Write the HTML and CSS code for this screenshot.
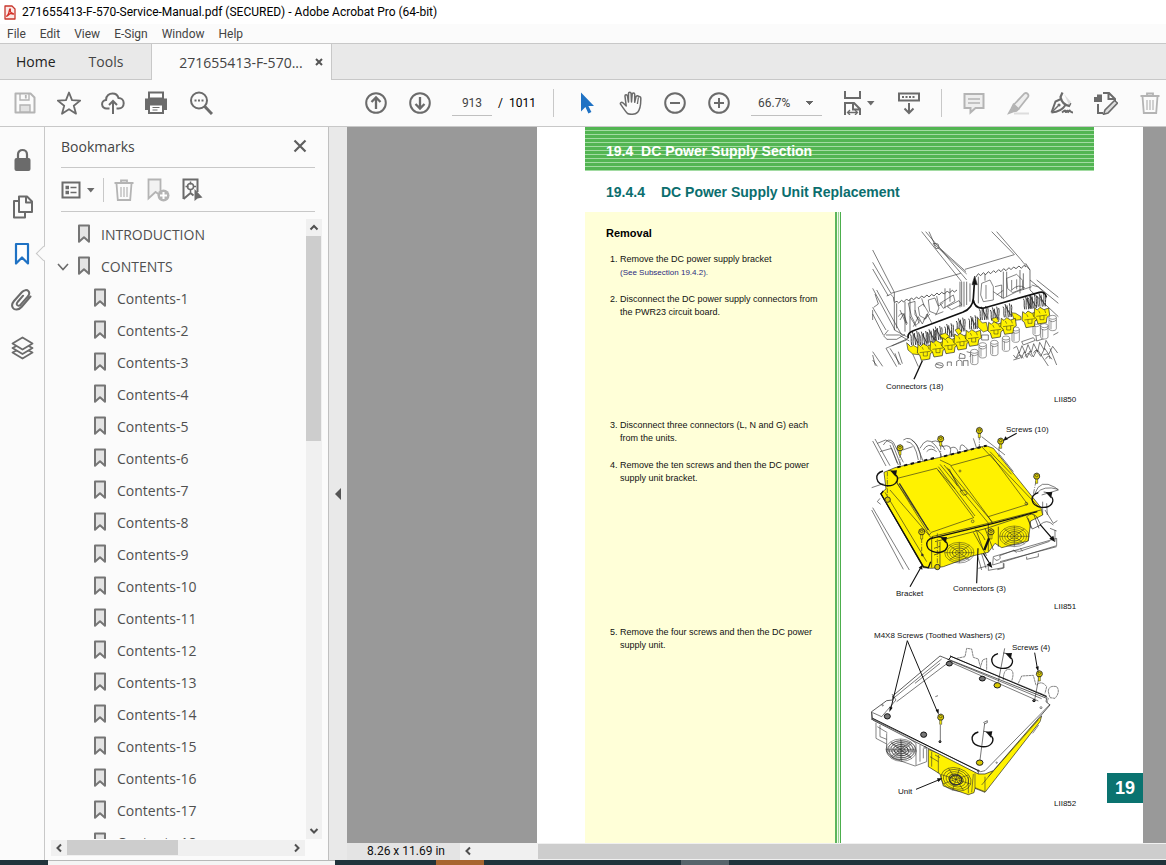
FILE: index.html
```html
<!DOCTYPE html>
<html lang="en">
<head>
<meta charset="utf-8">
<meta name="viewport" content="width=device-width, initial-scale=1">
<title>271655413-F-570-Service-Manual.pdf (SECURED) - Adobe Acrobat Pro (64-bit)</title>
<link rel="stylesheet" href="styles.css">
</head>
<body>
<svg class="defs" aria-hidden="true">
  <symbol id="bm" viewBox="0 0 14 20"><path d="M2 1.500h10v16.300l-5-4.600-5 4.600z" fill="#e4e4e4" stroke="#757575" stroke-width="2" stroke-linejoin="round"/></symbol>
  <symbol id="trash" viewBox="0 0 24 24"><path d="M2.500 5h19M9 4.500V2.500h6v2M4.500 5.500l1.300 16.500h12.400l1.300-16.500" fill="none" stroke="currentColor" stroke-width="1.800"/><path d="M9 9v10M12 9v10M15 9v10" stroke="currentColor" stroke-width="1.200"/></symbol>
</svg>

<header class="titlebar">
  <svg class="app-icon" viewBox="0 0 12 15"><path d="M1 1h7l3 3v10H1z" fill="#fbe9e7" stroke="#c8372d" stroke-width="1.300" stroke-linejoin="round"/><path d="M6 4c-1 0-.3 3-2 5.500S2.500 11 3 11.200 5 8.800 6.500 8.700 9.500 9.600 9.500 8.900 7.500 8.600 6.600 7 6.900 4 6 4z" fill="none" stroke="#d32f26" stroke-width="1.300"/></svg>
  <h1 class="title">271655413-F-570-Service-Manual.pdf (SECURED) - Adobe Acrobat Pro (64-bit)</h1>
</header>

<nav class="menubar">
  <button>File</button><button>Edit</button><button>View</button><button>E-Sign</button><button>Window</button><button>Help</button>
</nav>

<div class="tabs">
  <button class="tab tab-home">Home</button>
  <button class="tab tab-tools">Tools</button>
  <div class="tab-doc">
    <button class="tab-name">271655413-F-570...</button>
    <button class="tab-close" aria-label="Close tab"><svg viewBox="0 0 8 8"><path d="M1 1l6 6M7 1L1 7" stroke="#555" stroke-width="2"/></svg></button>
  </div>
</div>

<div class="toolbar">
  <div class="tools">
    <button class="off" aria-label="Save"><svg viewBox="0 0 24 24" fill="none" stroke="currentColor" stroke-width="2"><path d="M2.500 2.500h15l4 4v15h-19z" stroke-linejoin="round"/><path d="M7 2.500v6.500h9V2.500" stroke-width="1.400"/><path d="M12.800 4v3.500" stroke-width="1.800"/><path d="M7 21v-7h10v7z" fill="#e2e2e2" stroke-width="1.400"/></svg></button>
    <button aria-label="Star"><svg viewBox="0 0 24 24"><path d="M12 1.500l3 7.700 8.200.4-6.400 5.100 2.200 8L12 18.200 5 22.700l2.200-8L.8 9.600 9 9.200z" fill="none" stroke="currentColor" stroke-width="1.800" stroke-linejoin="round"/></svg></button>
    <button aria-label="Upload"><svg viewBox="0 0 24 24" fill="none" stroke="currentColor" stroke-width="2"><path d="M8.500 17.500H5.700a4.300 4.300 0 0 1-.6-8.600C5 4.500 8.500 2.500 11.500 2.500c3.200 0 5.300 1.800 6 4.600 3 0 5.200 2.200 5.200 5.200s-2.200 5.200-5 5.200h-2.200"/><path d="M12 23V10.500M8 14l4-4 4 4"/></svg></button>
    <button aria-label="Print"><svg viewBox="0 0 24 24"><path d="M4 1.500h14v6H4z" fill="#fff" stroke="currentColor" stroke-width="2"/><path d="M0 7.500h22V19h-4v-4H4v4H0z" fill="currentColor"/><path d="M4 13.500h14v8.500H4z" fill="#fff" stroke="currentColor" stroke-width="2"/><path d="M7.500 16.500h7M7.500 19h5" stroke="currentColor"/></svg></button>
    <button aria-label="Find"><svg viewBox="0 0 24 24" fill="none" stroke="currentColor"><circle cx="10" cy="9.500" r="8" stroke-width="2"/><path d="M15.800 15.500l7.200 7.500" stroke-width="3"/><path d="M5.500 9.500h2M9 9.500h2M12.500 9.500h2" stroke-width="2"/></svg></button>
  </div>
  <div class="tools tools-page">
    <button aria-label="Previous page"><svg viewBox="0 0 24 24" fill="none" stroke="currentColor" stroke-width="2"><circle cx="12" cy="12" r="9.800"/><path d="M12 18V7M7.500 11L12 6.500l4.500 4.500" stroke-width="2.300"/></svg></button>
    <button aria-label="Next page"><svg viewBox="0 0 24 24" fill="none" stroke="currentColor" stroke-width="2"><circle cx="12" cy="12" r="9.800"/><path d="M12 6v11M7.500 13l4.500 4.500 4.500-4.500" stroke-width="2.300"/></svg></button>
    <input class="page-input" type="text" value="913" aria-label="Page number">
    <span class="page-count">/&nbsp; 1011</span>
  </div>
  <div class="tools tools-view">
    <button aria-label="Select"><svg viewBox="0 0 24 24"><path d="M6 1.500v19l4.400-4.400 3 6.400 3-1.400-3-6.200h5.600z" fill="#1f72c4"/></svg></button>
    <button aria-label="Hand"><svg viewBox="0 0 24 24"><path d="M8.500 22.500c-2.500-2.500-4.500-6-6.900-9.200-.8-1.300.9-2.600 2.300-1.500l3.300 3.100L6 5.300c-.2-1.700 2-2 2.400-.4L9.500 11V2.600c0-1.800 2.500-1.800 2.600 0L12.500 11l.7-7.800c.2-1.700 2.500-1.500 2.500.2V11.300l1.300-5.600c.5-1.600 2.700-1.200 2.500.4.6-.9 2.400-.5 2.300 1 0 4 .4 10.500-3.300 14.300-2.500 2.300-7.500 2.300-10 1.100z" fill="none" stroke="currentColor" stroke-width="1.500" stroke-linejoin="round"/><path d="M19.300 7l-.9 6" stroke="currentColor" stroke-width="1.300"/></svg></button>
    <button aria-label="Zoom out"><svg viewBox="0 0 24 24" fill="none" stroke="currentColor" stroke-width="2"><circle cx="12" cy="12" r="9.800"/><path d="M7 12h10"/></svg></button>
    <button aria-label="Zoom in"><svg viewBox="0 0 24 24" fill="none" stroke="currentColor" stroke-width="2"><circle cx="12" cy="12" r="9.800"/><path d="M7 12h10M12 7v10"/></svg></button>
    <select class="zoom" aria-label="Zoom level"><option>66.7%</option><option>100%</option></select>
    <button class="fit" aria-label="Fit width"><svg class="wide" viewBox="0 0 34 24" fill="none" stroke="currentColor" stroke-width="2"><path d="M4 0v7h15V0"/><path d="M4 24V12h9l6 6v6M12 12v6.500h7" /><path d="M7 21.500h9M9 19l-2.500 2.500L9 24M14 19l2.500 2.500L14 24" stroke-width="1.300"/><path d="M26 10h7.500l-3.700 4.500z" fill="currentColor" stroke="none"/></svg></button>
    <button aria-label="Reading mode"><svg viewBox="0 0 24 24" fill="none" stroke="currentColor" stroke-width="2"><path d="M2 2.500h20v7H2z"/><path d="M5 6h14" stroke-dasharray="2 1.500"/><path d="M12 12v9.500M7.500 17.500L12 22l4.500-4.500"/></svg></button>
  </div>
  <div class="tools tools-edit">
    <button class="off" aria-label="Comment"><svg viewBox="0 0 24 24" fill="#eee" stroke="currentColor" stroke-width="2"><path d="M2.500 3h19v14h-8l-5 4.500V17h-6z"/><path d="M6 8h12M6 12h12" stroke-width="1.400"/></svg></button>
    <button class="off" aria-label="Highlight"><svg viewBox="0 0 24 24" fill="#eee" stroke="currentColor" stroke-width="1.800"><path d="M8 22.500h15" stroke="#ddd" stroke-width="2"/><path d="M8 13.500L18.500 2.500c2-1.500 5 1 3.500 3.500L12.500 18l-4 .5-2-1.800z"/><path d="M7.500 13.500l5 4.500-2 2-3 .3L3 22l2.500-4.500z" fill="currentColor"/></svg></button>
    <button aria-label="Sign"><svg viewBox="0 0 24 24" fill="none" stroke="currentColor" stroke-width="2"><path d="M1.500 21.500L5.500 10.500 12 7.500M1.500 21.500C8 21 12.500 19 15.500 14"/><path d="M12.500 1.500L10.500 6c1 5 4 8 8.500 9l1.500-3" stroke-width="2.200"/><path d="M14 3l7 8-2 3z" fill="#ddd" stroke="none"/><path d="M2 21l6-6" stroke-width="1.500"/><circle cx="9" cy="14" r="1.600" fill="currentColor" stroke="none"/><path d="M12 21.500c3-2 3-3 3.500-1s1.500-2 2-.5.500 1.500 1.500 0 1 1.500 4 1.500"/></svg></button>
    <button aria-label="Edit PDF"><svg viewBox="0 0 24 24" fill="none" stroke="currentColor" stroke-width="2"><path d="M9 2h6l6 6v3M14.500 2v6H20M4 13v9h5"/><path d="M0 6h8v5H0zM3 3.500h5V7H3z" fill="currentColor" stroke="none"/><path d="M20.500 9.500l3 2.500-9.500 10-4.300 1.200L11 19z" fill="#ddd" stroke-width="1.600"/></svg></button>
    <button class="off" aria-label="Delete"><svg viewBox="0 0 24 24"><use href="#trash"/></svg></button>
  </div>
</div>

<main class="workspace">
  <nav class="rail">
    <button aria-label="Security"><svg viewBox="0 0 24 24"><path d="M7 11V6.500c0-6 9-6 9 0V11" fill="none" stroke="currentColor" stroke-width="2.200"/><rect x="3.500" y="10" width="16" height="13" rx="2" fill="currentColor"/></svg></button>
    <button aria-label="Pages"><svg viewBox="0 0 24 24" fill="none" stroke="currentColor" stroke-width="2" stroke-linejoin="round"><path d="M8 1.500h8l5 5v10.500H8zM15 2v5.500h6"/><path d="M7 6H3v16.500h11V18"/></svg></button>
    <button class="current" aria-label="Bookmarks"><svg viewBox="0 0 24 24"><path d="M5 2h12v19.500l-6-6-6 6z" fill="#fff" stroke="#1f72c4" stroke-width="2.200" stroke-linejoin="round"/></svg></button>
    <button aria-label="Attachments"><svg viewBox="0 0 24 24"><path d="M19.500 7.500l-9 10.500c-3 3.400-7 3.200-8.500 1-1.700-2.300-.7-5 1-7l8-9c2-2.400 5.200-2.300 6.400-.8 1.500 1.800.6 4-.8 5.500l-7 8c-1.200 1.300-2.800 1.200-3.500.3-.7-1-.3-2 .5-3l5.500-6.300" fill="none" stroke="currentColor" stroke-width="2" stroke-linecap="round"/></svg></button>
    <button aria-label="Layers"><svg viewBox="0 0 24 24" fill="#fafafa" stroke="currentColor" stroke-width="1.800" stroke-linejoin="round"><path d="M1.500 16.500l4-2h12l4 2-10 6z"/><path d="M1.500 12l4-2h12l4 2-10 6z"/><path d="M11.500 1.500l10 6-10 6-10-6z"/></svg></button>
  </nav>

  <aside class="panel">
    <div class="panel-head">
      <h2>Bookmarks</h2>
      <button aria-label="Close panel"><svg viewBox="0 0 14 14"><path d="M1.500 1.500l11 11M12.500 1.500l-11 11" stroke="#5f5f5f" stroke-width="2.200"/></svg></button>
    </div>
    <div class="panel-tools">
      <button class="opts" aria-label="Options"><svg class="wide" viewBox="0 0 34 24"><path d="M1.500 4.500h17v15h-17z" fill="none" stroke="currentColor" stroke-width="2"/><path d="M4.500 9.500h3.500M4.500 14.500h3.500" stroke="currentColor" stroke-width="3.500"/><path d="M9.500 9.500h6M9.500 14.500h6" stroke="currentColor" stroke-width="1.500"/><path d="M26 10h7.500l-3.700 4.500z" fill="currentColor"/></svg></button>
      <button class="off" aria-label="Delete bookmark"><svg viewBox="0 0 24 24"><use href="#trash"/></svg></button>
      <button class="off" aria-label="New bookmark"><svg viewBox="0 0 24 24"><path d="M2.500 1.500h12v16l-5-3.500-7 6.500z" fill="#f2f2f2" stroke="currentColor" stroke-width="1.800"/><circle cx="17.500" cy="17.500" r="6" fill="currentColor"/><path d="M14 17.500h7M17.500 14v7" stroke="#fff" stroke-width="2"/></svg></button>
      <button aria-label="Find current bookmark"><svg viewBox="0 0 24 24"><path d="M3.500 21V1.500h14V14M3.500 21l7-6 3 2.500" fill="none" stroke="currentColor" stroke-width="2"/><circle cx="10.500" cy="8.500" r="3" fill="none" stroke="currentColor" stroke-width="1.500"/><path d="M10.500 3.500v3M10.500 11v3M5.500 8.500h3M13 8.500h3" stroke="currentColor" stroke-width="1.500"/><path d="M14.500 11v12l3-2.500 5-1z" fill="currentColor"/></svg></button>
    </div>
    <div class="tree">
      <ul class="list">
        <li><a href="#p"><svg class="bm"><use href="#bm"/></svg>INTRODUCTION</a></li>
        <li class="open"><a href="#p"><svg class="bm"><use href="#bm"/></svg>CONTENTS</a>
          <svg class="chev" viewBox="0 0 12 8"><path d="M1 1l5 5.500L11 1" fill="none" stroke="#6b6b6b" stroke-width="1.600"/></svg>
          <ul>
            <li><a href="#p"><svg class="bm"><use href="#bm"/></svg>Contents-1</a></li>
            <li><a href="#p"><svg class="bm"><use href="#bm"/></svg>Contents-2</a></li>
            <li><a href="#p"><svg class="bm"><use href="#bm"/></svg>Contents-3</a></li>
            <li><a href="#p"><svg class="bm"><use href="#bm"/></svg>Contents-4</a></li>
            <li><a href="#p"><svg class="bm"><use href="#bm"/></svg>Contents-5</a></li>
            <li><a href="#p"><svg class="bm"><use href="#bm"/></svg>Contents-6</a></li>
            <li><a href="#p"><svg class="bm"><use href="#bm"/></svg>Contents-7</a></li>
            <li><a href="#p"><svg class="bm"><use href="#bm"/></svg>Contents-8</a></li>
            <li><a href="#p"><svg class="bm"><use href="#bm"/></svg>Contents-9</a></li>
            <li><a href="#p"><svg class="bm"><use href="#bm"/></svg>Contents-10</a></li>
            <li><a href="#p"><svg class="bm"><use href="#bm"/></svg>Contents-11</a></li>
            <li><a href="#p"><svg class="bm"><use href="#bm"/></svg>Contents-12</a></li>
            <li><a href="#p"><svg class="bm"><use href="#bm"/></svg>Contents-13</a></li>
            <li><a href="#p"><svg class="bm"><use href="#bm"/></svg>Contents-14</a></li>
            <li><a href="#p"><svg class="bm"><use href="#bm"/></svg>Contents-15</a></li>
            <li><a href="#p"><svg class="bm"><use href="#bm"/></svg>Contents-16</a></li>
            <li><a href="#p"><svg class="bm"><use href="#bm"/></svg>Contents-17</a></li>
            <li><a href="#p"><svg class="bm"><use href="#bm"/></svg>Contents-18</a></li>
          </ul>
        </li>
      </ul>
      <div class="vbar">
        <svg class="arrow" viewBox="0 0 16 16"><path d="M4.500 10.500L8 7l3.500 3.500" fill="none" stroke="#505050" stroke-width="2"/></svg>
        <div class="track"><div class="thumb"></div></div>
        <svg class="arrow" viewBox="0 0 16 16"><path d="M4.500 6L8 9.500 11.500 6" fill="none" stroke="#505050" stroke-width="2"/></svg>
      </div>
    </div>
    <div class="hbar">
      <svg class="arrow" viewBox="0 0 16 16"><path d="M10 4.500L6.500 8l3.500 3.500" fill="none" stroke="#505050" stroke-width="2"/></svg>
      <div class="track"><div class="thumb"></div></div>
      <svg class="arrow" viewBox="0 0 16 16"><path d="M6 4.500L9.500 8 6 11.500" fill="none" stroke="#505050" stroke-width="2"/></svg>
    </div>
  </aside>

  <button class="splitter" aria-label="Collapse panel"><svg viewBox="0 0 8 12"><path d="M7 0v12L1 6z" fill="#555"/></svg></button>

  <section class="viewer">
    <div class="canvas">
      <article class="page" id="p">
        <h2 class="band">19.4&nbsp; DC Power Supply Section</h2>
        <h3 class="section"><span>19.4.4</span>DC Power Supply Unit Replacement</h3>
        <div class="columns">
          <div class="steps">
            <h4>Removal</h4>
            <ol>
              <li>Remove the DC power supply bracket<br><a href="#p">(See Subsection 19.4.2).</a></li>
              <li>Disconnect the DC power supply connectors from the PWR23 circuit board.</li>
              <li class="gap">Disconnect three connectors (L, N and G) each from the units.</li>
              <li>Remove the ten screws and then the DC power supply unit bracket.</li>
              <li class="gap-wide">Remove the four screws and then the DC power supply unit.</li>
            </ol>
          </div>
          <div class="figures">
            <svg class="figure" viewBox="0 0 220 190" role="img" aria-label="DC power supply connectors">
              <defs>
                <g id="plug"><path d="M-22-20L-14-14-6-22 6-15 20-20 23 2 15 8 13 24-12 28-17 12-24 6z" fill="#fff200" stroke="#222" stroke-width="2"/><path d="M-17 5L15 1M-6 4v11h12V3M-10-12l4 8M8-14l3 9" fill="none" stroke="#222" stroke-width="1.500"/></g>
                <path id="wires" d="M-14-42C-8-35-14-25-10-10M-8-50C-2-38-8-26-5-10M-2-46L2-10M5-52C10-38 4-28 7-11M11-48C15-36 9-28 12-11M-5-42L9-16" fill="none" stroke="#333" stroke-width="2.800"/>
                <g id="cap" fill="#fff" stroke="#333" stroke-width="1.500"><path d="M-11-18V16C-11 24 11 24 11 16V-18"/><ellipse cy="-18" rx="11" ry="6"/><path d="M-5-8V18M-11-10Q0 0 11-10" fill="none"/></g>
                <g id="fan" fill="none" stroke="#222" stroke-width="1.400"><ellipse rx="44" ry="31"/><ellipse rx="37" ry="26"/><ellipse rx="29" ry="20"/><ellipse rx="21" ry="14" stroke-width="2"/><ellipse rx="12" ry="8"/><path d="M-44 0H44M0-31V31M-30-22L30 22M30-22L-30 22"/></g>
                <g id="screw"><path d="M-3 5h6v15h-6z" fill="#fff200" stroke="#222" stroke-width="1.500"/><path d="M-9 1L-7-8 1-11 8-7 9 1 5 7-5 7z" fill="#d8c800" stroke="#222" stroke-width="2.500"/><ellipse cy="-3" rx="4" ry="3" fill="#fff200" stroke="#222"/></g>
                <g id="spin" fill="none" stroke="#111"><path d="M-14-23C-42-15-38 16-5 21 26 24 36 2 25-11" stroke-width="4"/><path d="M2-25C14-24 20-20 24-15" stroke-width="2"/><path d="M8-24L28-25 24-6z" fill="#111" stroke="none"/></g>
              </defs>
              <g transform="scale(.33333)" fill="none" stroke="#333" stroke-width="1.900">
                <path d="M38 90L103 217 302 160M38 127L93 220 103 217M38 147L85 228M185 35L305 185M197 35L320 180M207 35L225 75 320 162M240 85L318 155M395 35L463 104 315 148M410 35L482 118 490 128M38 205L105 330M50 210L125 345M38 262L78 330M38 282L70 345M38 300V270M80 228l12-5 8 8 2 14M103 245V330L140 350M103 217L103 245M45 222l10 30-14 10M220 70l14 2 4 12-10 2z"/>
                <path d="M103 247l8-3 5 5 9-8 6 5 9-9 6 6 8-9 7 5 9-8 6 6 9-9 7 5 9-8 6 6 8-8 7 5 9-9 6 6 8-8 8 5 9-9 6 6 9-8 6 5 8-6M347 172l8-11 7 6 8-9 7 6 8-9 7 6 9-9 6 6 9-9 7 6 8-9 7 6 9-9 6 6 8-8 7 5 9-8 7 7 8-9 6 5" stroke-width="2.400"/>
                <path d="M300 185V262M305 186V260M312 185V260M320 185V255M330 190V245M497 130L510 150V210M510 150L490 128M510 180L595 250M530 180L595 232M510 210L595 290M490 160V210M355 170V250M135 245v90M255 205v60M430 155v80M150 238v100M110 250v75M480 150v70M440 155v75M375 162v20M270 205v40" stroke-width="2"/>
                <path d="M145 250l20-6v40l15 20-12 12-14-28zM175 262l15-10 15 25-8 20-18-10zM205 240l20-6 12 30-8 18-20-8zM240 250l40-25 5 18-35 22zM262 260l35-18 8 12-30 15zM150 290l18 30M120 270l20 45M190 300l20-18M225 285l25-10M115 290q12-20 18 0t10 20M365 190l25-10 10 20v40l-30 5-8-20zM378 195v42M405 200l20-5v40M440 175l30-12 18 18v25l-30 12-15-12zM455 180v32M470 178v30M400 215l30 20 40-20 45-15M120 300l12-20 8 30M160 320l15-30 12 22 14-30 14 26M185 235l8 25M230 228l6 30 14-10M165 270l12 40M455 210q20-20 40-6M410 225l20-14M515 195l20 6 15 14" stroke-width="1.800"/>
                <path d="M78 385L145 355M78 385L110 440M90 385L122 435M145 372L175 440M95 378L140 360M38 395l30 44M38 420l14 19M78 345h40l30 18M80 358h30l25-15M38 405l8 32M85 330l-14 18 10 10M105 400l12 34M115 395l12 36" />
                <path d="M365 345h20v15h-20zM485 365l35-12 6 8-36 14zM580 345l15-8M525 325l30-10v40l-25 8zM460 385l10-6 8 20 8-22 10 22 8-25 10 23 7-26 12 24 6-28 13 22 6-28 12 20M460 405l8 10 8-18 8 18 9-20 8 18 9-20 10 18 10-20 12 18 12-24 12 18 12-24 15 20M540 400l25 38M570 385l20 50M300 400l15 5v10h-18zM320 395l14 4-4 12M470 415q10-20 20 0M495 410q10-20 20 0M520 400q10-20 20 0M556 418q10-18 20 0M460 420l20-6"/>
                <use href="#cap" x="368" y="392"/><use href="#cap" x="403" y="385"/><use href="#cap" x="438" y="372"/><use href="#cap" x="467" y="345"/><use href="#cap" x="343" y="412"/><use href="#cap" x="530" y="325"/><use href="#cap" x="578" y="310"/><use href="#cap" x="553" y="335"/>
                <ellipse cx="238" cy="436" rx="12" ry="8"/><path d="M262 438v-12h12v12M290 438v-14q10-8 16 0v14M310 438v-16h14v16M228 432l20 6M550 405q20-10 20 12"/>
                <use href="#wires" x="165" y="385"/><use href="#wires" x="192" y="385"/><use href="#wires" x="215" y="378"/><use href="#wires" x="234" y="370"/><use href="#wires" x="268" y="362"/><use href="#wires" x="303" y="345"/><use href="#wires" x="340" y="338"/><use href="#wires" x="372" y="310"/><use href="#wires" x="405" y="312"/><use href="#wires" x="443" y="302"/><use href="#wires" x="504" y="278"/><use href="#wires" x="518" y="275"/><use href="#wires" x="545" y="270"/>
                <path d="M140 368l12 12 8-4 18 10-2 18-18-2-14-12zM240 345l16-6 12 10-4 14-16-4zM285 330l12-6 8 12-10 8z" fill="#fff200"/>
                <use href="#plug" x="196" y="393"/><use href="#plug" x="234" y="383"/><use href="#plug" x="270" y="373"/><use href="#plug" x="306" y="362"/><use href="#plug" x="341" y="351"/>
                <path d="M353 293l14 16 12-2 5 24-14 5-16-15zM455 278l12 2 16 10v9l-20 2zM395 296l14-4 8 12-14 6z" fill="#fff200"/>
                <use href="#plug" x="408" y="327"/><use href="#plug" x="446" y="315"/><use href="#plug" x="510" y="295"/><use href="#plug" x="546" y="284"/>
                <path d="M145 355Q140 340 160 332L308 277Q338 265 340 235L343 190M340 240Q345 268 372 264L538 217Q556 213 559 232" stroke="#111" stroke-width="5"/>
                <path d="M344 168l-8 26h16z" fill="#111"/><path d="M187 422L162 478" stroke="#111" stroke-width="4"/>
              </g>
              <text x="26" y="169">Connectors (18)</text><text class="ref" x="194" y="182">LII850</text>
            </svg>
            <svg class="figure figure-tall" viewBox="0 0 220 200" role="img" aria-label="Bracket and screws">
              <g transform="scale(.33333)" fill="none" stroke="#333" stroke-width="1.900">
                <path d="M38 78l40 75M45 72l45 80M52 85l25-10 20 10 25 65M70 90q15-25 30-8l30 60M60 110l35-10 20 50M90 90l22 55M130 75q20-15 40 15l20 50M140 80q25 0 35 55M155 75q25 15 28 60M128 105l30-10M180 100q20-40 45-10t18 45M190 105q15-25 35-5M200 110q12-15 30 0M245 95q35-12 25 25M270 100q20-12 25 15M300 105q0-25 15-10l14 15M215 80q25-10 40 25M340 70l10 30M365 65l70 55"/>
                <path d="M35 218l35-12M38 278l110 187M35 285l95 178M60 250l-8 10 10 8M525 235q15-45 60-18l10 8M530 235q20-25 65-12M545 240l50-15M555 285l25 40 12-8M548 260v40M560 265l2 35M585 345v35M400 425l190-55v22L398 450zM403 430a9 9 0 1 0 16-8l40-15 20 2 90-30M420 440l170-45M355 460l30-8v14l45-8v-14M500 425v8l35-8v-10M345 395l20 70M360 400l18 60M432 445v14l-20 5M570 340l20 8M540 330q20-20 40 0M460 405l10 8M480 400l8 8"/>
                <path d="M62 235L78 222 72 172 105 158 235 128 378 92 400 100 543 278 548 300 512 318 505 378 425 398 405 385 385 412 340 422 250 455 215 460 190 458z" fill="#fff200" stroke="#222" stroke-width="2"/>
                <path d="M112 157l10-3M132 152l10-3M152 147l10-3M172 142l10-3M192 137l10-3M212 132l10-3M252 124l10-3M272 119l10-3M292 114l10-3M312 109l10-3M332 104l10-3M352 99l10-3M372 94l8-2" stroke="#111" stroke-width="6"/>
                <path d="M112 190L230 160 341 308 214 352 208 360 112 205zM272 152L392 119 503 268 385 305zM235 155L345 303M240 148L388 328M252 150L398 322M262 158L305 226M240 135L272 150M108 200L210 350M62 235L190 455M75 232L200 440M90 225L215 370M365 95L445 180 540 280M390 110L455 178M418 118L460 170M234 165L285 222M300 228l12-3 10 12-12 4zM268 162l24 50M385 305l14 22" stroke="#222" stroke-width="1.800"/>
                <path d="M118 205L205 345" stroke-width="4"/>
                <path d="M215 365L385 325 543 285M225 380L380 340 500 300M215 370V458M240 380v75M340 352l40 70M350 350l20 55M375 340l25 65M385 330v80M415 335v60M505 310l8 30M500 305q15-15 30 0l12 25-25 12zM522 300l15 40M345 345q20 5 30 30M222 400l18-6M222 420l18-6" stroke="#222" stroke-width="2"/>
                <path d="M215 370L400 325 532 290" stroke="#111" stroke-width="3.500"/>
                <use href="#fan" x="298" y="413"/><use href="#fan" x="463" y="364"/>
                <path d="M62 235L190 455 205 458 212 440M70 228l-8 10" stroke="#111" stroke-width="4"/>
                <circle cx="338" cy="319" r="4"/><circle cx="499" cy="266" r="4"/><circle cx="300" cy="168" r="3"/>
                <path d="M120 115v35M242 90v40M358 62v40M417 95v30M528 198l-8 40M185 370v50M232 355v95M82 170v80" stroke-dasharray="14 4 3 4"/>
                <use href="#screw" x="120" y="100"/><use href="#screw" x="242" y="73"/><use href="#screw" x="358" y="48"/><use href="#screw" x="422" y="80"/><use href="#screw" x="530" y="185"/><use href="#screw" x="185" y="352"/><use href="#screw" x="393" y="352"/><path d="M387 370l-14 35" stroke="#111" stroke-width="7"/>
                <circle cx="83" cy="254" r="8" fill="#d8c800" stroke-width="3"/><circle cx="232" cy="456" r="8" fill="#d8c800" stroke-width="3"/><circle cx="187" cy="420" r="3" fill="#222"/>
                <use href="#spin" x="83" y="191"/><use href="#spin" x="233" y="391"/><use href="#spin" x="549" y="256"/>
                <path d="M470 55L438 72M150 515L182 458M350 505L354 400M370 415L392 450M540 328L578 372" stroke="#111" stroke-width="3.500"/><path d="M430 78l6-14 8 9zM187 449l0 15-11-6zM397 459l-17-10 12-9zM585 381l-17-10 12-9z" fill="#111" stroke="none"/>
              </g>
              <text x="146" y="17">Screws (10)</text><text x="36" y="181">Bracket</text><text x="93" y="176">Connectors (3)</text><text class="ref" x="194" y="194">LII851</text>
            </svg>
            <svg class="figure" viewBox="0 0 220 190" role="img" aria-label="Power supply unit">
              <g transform="scale(.33333)" fill="none" stroke="#333" stroke-width="1.800">
                <path d="M290 115l25-5 5-25 15 2 5 25 15 5 5 20M360 145l8-25 12-5v35M430 180q0-35 20-32 15 5 5 35M475 190l10-22 35-2 8 30M530 195q15-15 30 5l-5 20M565 215q0-20 25-15 12 15-5 35l-15-2zM540 220l25 15-5 15" stroke-dasharray="8 1"/>
                <path d="M48 308V355L80 372M80 340V395L100 415 165 438 200 425V380M140 350l28 20v65M180 375v50M60 315v35l20 8M52 320l30 18M190 385v30" fill="none"/>
                <use href="#fan" x="122" y="388"/><use href="#fan" x="125" y="393"/>
                <path d="M205 388V440L240 462 250 498 325 524 342 518 345 505 375 517 540 305 545 288 375 455z" fill="#fff200" stroke="#222" stroke-width="2"/>
                <path d="M215 395v45M235 405v55M345 460v45M375 470v45M385 470L535 300M365 495l160-195M340 462l-5 55M325 470v50M225 405l15 8M210 410l25 15M375 515l-30-12M518 340l18-25"/>
                <g stroke-width="2"><use href="#fan" transform="translate(288 478) rotate(18) scale(1.050 1.100)"/><ellipse cx="287" cy="480" rx="18" ry="15" stroke-width="4"/></g>
                <path d="M35 275L80 242 98 240V228L240 108 265 118 560 235 558 245 570 255 400 452 375 462 355 462 38 300z" fill="#fff" stroke="#222" stroke-width="2.200"/>
                <path d="M38 298L362 455 375 452 570 253M38 278L65 290 108 240 96 222M100 235L245 117M110 245L262 130M262 118L545 236M268 125L535 243M270 108L560 228M35 275V300M355 462V450M165 190L240 130" stroke="#222"/>
                <path d="M270 108L560 230M38 295L355 452M265 120l8-10" stroke="#111" stroke-width="3"/>
                <circle cx="68" cy="256" r="2"/><circle cx="543" cy="263" r="3"/><circle cx="195" cy="382" r="3"/><circle cx="355" cy="453" r="3"/><circle cx="410" cy="428" r="2"/>
                <path d="M434 85L415 185M537 170L524 240M241 315v48M374 310L360 420M226 230l8-3M370 308l12-6v6l-10 4" stroke-width="2"/>
                <g fill="#777" stroke="#111" stroke-width="3"><ellipse cx="268" cy="131" rx="9" ry="7"/><ellipse cx="367" cy="176" rx="9" ry="7"/><ellipse cx="82" cy="289" rx="9" ry="8"/><ellipse cx="191" cy="344" rx="9" ry="8"/><ellipse cx="240" cy="365" rx="3" ry="3"/><ellipse cx="522" cy="242" rx="4" ry="3"/></g>
                <g fill="#d8c800" stroke="#222" stroke-width="3"><ellipse cx="412" cy="196" rx="10" ry="8"/><ellipse cx="359" cy="428" rx="10" ry="8"/></g>
                <use href="#screw" x="242" y="293"/><use href="#screw" x="538" y="163"/>
                <use href="#spin" x="428" y="124"/><use href="#spin" x="369" y="359"/>
                <path d="M142 62L92 268M142 62L232 275M524 98L532 145M168 508L238 479" stroke="#111" stroke-width="3"/><path d="M88 276l1-16 9 3zM236 284l-9-14 9-3zM535 155l-8-14 9-2zM247 475l-12 11-4-11z" fill="#111" stroke="none"/>
              </g>
              <text x="14" y="18">M4X8 Screws (Toothed Washers) (2)</text><text x="152" y="30">Screws (4)</text><text x="38" y="174">Unit</text><text class="ref" x="194" y="186">LII852</text>
            </svg>
          </div>
        </div>
        <span class="chapter">19</span>
      </article>
    </div>
    <footer class="status">
      <span class="size">8.26 x 11.69 in</span>
      <svg class="arrow" viewBox="0 0 16 16"><path d="M10 4.500L6.500 8l3.500 3.500" fill="none" stroke="#505050" stroke-width="2"/></svg>
      <div class="track"><div class="thumb"></div></div>
    </footer>
  </section>
</main>
<div class="taskbar"><span class="window"></span><span class="task"></span><span class="task-dim"></span></div>
</body>
</html>
```

FILE: styles.css
```css
* { box-sizing: border-box; }

body {
  margin: 0;
  height: 100vh;
  display: flex;
  flex-direction: column;
  overflow: hidden;
  background: #fbfbfb;
  color: #444;
  font-family: Roboto, "Noto Sans", sans-serif;
  font-size: 12px;
}

h1, h2, h3, h4, ul, ol { margin: 0; padding: 0; font-weight: 400; }
ul, ol { list-style: none; }
svg { display: block; }
.defs { width: 0; height: 0; position: absolute; }

button {
  border: 0;
  padding: 0;
  background: none;
  color: inherit;
  font: inherit;
}

.titlebar {
  display: flex;
  align-items: center;
  gap: 6px;
  height: 24px;
  padding: 0 4px;
  background: #fff;
}
.app-icon { width: 12px; height: 15px; }
.title { font-size: 12px; line-height: 16px; color: #000; white-space: nowrap; }

.menubar {
  display: flex;
  gap: 14px;
  height: 19px;
  padding-left: 7px;
  line-height: 18px;
}

.tabs {
  display: flex;
  height: 37px;
  border-top: 1px solid #c8c8c8;
  border-bottom: 1px solid #c8c8c8;
  background: #e9e9e9;
  font-family: "Open Sans", "Noto Sans", sans-serif;
  font-size: 14px;
}
.tab-home { padding-left: 16px; color: #222; }
.tab-tools { padding: 0 28px 0 33px; }
.tab-doc {
  display: flex;
  align-items: center;
  gap: 12px;
  padding: 0 8px 0 27px;
  margin-bottom: -1px;
  border: solid #c8c8c8;
  border-width: 0 1px;
  background: #fbfbfb;
}
.tab-close svg { width: 8px; height: 8px; }

.toolbar {
  display: flex;
  flex: none;
  height: 47px;
  padding-left: 3px;
  border-bottom: 1px solid #c8c8c8;
  overflow: hidden;
  color: #6b6b6b;
}
.tools { display: flex; align-items: center; flex: none; }
.tools button { width: 44px; display: flex; justify-content: center; }
.tools svg { width: 24px; height: 24px; }
.tools svg.wide { width: 34px; }
.toolbar .off, .panel-tools .off { color: #b4b4b4; }
.tools-page { margin-left: 131px; }
.page-input {
  width: 40px;
  height: 26px;
  margin-left: 10px;
  border: 0;
  border-bottom: 1px solid #c0c0c0;
  background: none;
  text-align: center;
  font: inherit;
  color: #444;
}
.page-count { width: 35px; margin-left: 6px; color: #000; white-space: nowrap; }
.tools-view { margin-left: 20px; }
.tools-view::before,
.tools-edit::before { content: ""; width: 1px; height: 28px; background: #c8c8c8; }
.tools-view::before { margin-right: 11px; }
.tools-edit::before { margin-right: 10px; }
.zoom {
  width: 71px;
  height: 26px;
  margin: 0 14px 0 10px;
  padding: 0 7px;
  border: 0;
  border-bottom: 1px solid #c0c0c0;
  appearance: none;
  color: #444;
  font: inherit;
  background: linear-gradient(to bottom right, #666 50%, transparent 50%) no-repeat 59px 11px / 4px 4px,
    linear-gradient(to bottom left, #666 50%, transparent 50%) no-repeat 55px 11px / 4px 4px;
}
.tools .fit { margin-right: 7px; }
.tools-edit { margin: 0 -6px 0 auto; }

.workspace { display: flex; flex: 1; min-height: 0; }

.rail {
  display: flex;
  flex-direction: column;
  flex: 0 0 45px;
  gap: 23px;
  padding: 21px 0 0 11px;
  border-right: 1px solid #c8c8c8;
  color: #6b6b6b;
}
.rail svg { width: 24px; height: 24px; }
.rail .current { position: relative; }
.rail .current::after {
  content: "";
  position: absolute;
  right: -5px;
  top: 6px;
  width: 10px;
  height: 10px;
  transform: rotate(45deg);
  border: solid #c8c8c8;
  border-width: 0 0 1px 1px;
  background: #fbfbfb;
}

.panel {
  display: flex;
  flex-direction: column;
  flex: 0 0 283px;
  font-family: "Open Sans", "Noto Sans", sans-serif;
}
.panel-head {
  display: flex;
  justify-content: space-between;
  align-items: center;
  height: 41px;
  margin: 0 13px 0 16px;
  padding: 0 8px 2px 0;
  border-bottom: 1px solid #c8c8c8;
}
.panel-head h2 { font-size: 14px; }
.panel-head svg { width: 14px; height: 14px; }
.panel-tools {
  display: flex;
  align-items: center;
  gap: 10px;
  height: 44px;
  margin: 0 13px 0 16px;
  border-bottom: 1px solid #c8c8c8;
  color: #6b6b6b;
}
.panel-tools svg { width: 24px; height: 24px; }
.panel-tools svg.wide { width: 34px; }
.opts { padding-right: 8px; margin-right: -2px; border-right: 1px solid #c8c8c8; }

.tree {
  display: flex;
  flex: 1;
  min-height: 0;
  margin: 7px 6px 0 0;
}
.list { flex: 1; overflow: hidden; padding-left: 32px; font-size: 14px; }
.list ul { padding-left: 16px; }
.list li { position: relative; }
.list a {
  display: flex;
  align-items: center;
  gap: 10px;
  height: 32px;
  padding-bottom: 2px;
  color: #505050;
  text-decoration: none;
}
.bm { width: 14px; height: 20px; }
.chev { position: absolute; left: -20px; top: 12px; width: 12px; height: 8px; }
.arrow { width: 16px; height: 16px; flex: none; }
.vbar { display: flex; flex-direction: column; width: 16px; background: #f0f0f0; }
.track { flex: 1; background: #f0f0f0; }
.thumb { background: #cdcdcd; }
.vbar .track { padding-top: 1px; }
.vbar .thumb { width: 15px; height: 35%; }
.hbar {
  display: flex;
  height: 16px;
  margin: 1px 23px 4px 6px;
  background: #f0f0f0;
}
.hbar .thumb { width: 50%; height: 15px; }

.splitter {
  flex: 0 0 19px;
  display: flex;
  align-items: center;
  padding-left: 5px;
  border-left: 1px solid #c0c0c0;
  background: #e9e9e9;
}
.splitter svg { width: 8px; height: 12px; }

.viewer { display: flex; flex-direction: column; flex: 1; min-width: 0; }
.canvas {
  display: grid;
  grid-template-columns: 190fr 606fr 23fr;
  flex: 1;
  min-height: 0;
  overflow: hidden;
  background: #999;
}
.page {
  grid-column: 2;
  position: relative;
  display: flex;
  flex-direction: column;
  min-height: 0;
  padding-left: 48px;
  background: #fff;
  font-family: "Liberation Sans", Arial, sans-serif;
  color: #111;
}
.band {
  height: 44px;
  margin-right: 49px;
  padding-left: 21px;
  background: repeating-linear-gradient(#52b552 0 3px, #a2dba2 3px 4px);
  color: #fff;
  font-size: 14px;
  font-weight: 700;
  line-height: 48px;
}
.section {
  display: flex;
  gap: 16px;
  height: 41px;
  padding-left: 21px;
  color: #0b6e6e;
  font-size: 14px;
  font-weight: 700;
  line-height: 42px;
}
.columns { display: flex; flex: 1; min-height: 0; }
.steps {
  flex: 0 0 256px;
  padding: 12px 20px 0 21px;
  background:
    linear-gradient(to right, #5cb55c 0 2px, #f0faec 2px 3px, #9ad394 3px 4px, #f0faec 4px 5px, #4cae4c 5px) no-repeat right / 6px 100%,
    #ffffd8;
}
.steps h4 { font-size: 11px; font-weight: 700; line-height: 18px; color: #000; }
.steps ol {
  padding: 11px 0 0 14px;
  list-style: decimal;
  font-size: 9px;
  line-height: 13px;
}
.steps li { margin-bottom: 14px; }
.steps li::marker { content: counter(list-item) ". "; }
.steps a { color: #2b2b80; font-size: 8px; text-decoration: none; }
.steps .gap { margin-top: 100px; }
.steps .gap-wide { margin-top: 141px; }
.figures {
  display: flex;
  flex-direction: column;
  gap: 5px;
  padding: 8px 0 0 19px;
}
.figure { width: 220px; height: 190px; flex: none; overflow: visible; }
.figure-tall { height: 200px; }
.figure text { font-size: 8px; fill: #111; }
.chapter {
  position: absolute;
  right: 0;
  bottom: 40px;
  width: 36px;
  background: #0a7370;
  color: #fff;
  font-size: 18px;
  font-weight: 700;
  line-height: 30px;
  text-align: center;
}

.status { display: flex; height: 17px; background: #f0f0f0; color: #111; }
.size { width: 113px; padding-left: 20px; line-height: 17px; background: #e4e4e4; white-space: nowrap; }
.status .track { padding: 1px 0 0 62px; }
.status .thumb { height: 15px; }

.taskbar { display: flex; height: 5px; flex: none; background: #20333b; }
.window { width: 287px; margin-left: 48px; border-top: 1px solid #b8b8b8; background: #f4f4f4; }
.task { width: 48px; margin-left: 101px; background: #a8652f; }
.task-dim { width: 48px; margin-left: 197px; background: #56646b; }
```
